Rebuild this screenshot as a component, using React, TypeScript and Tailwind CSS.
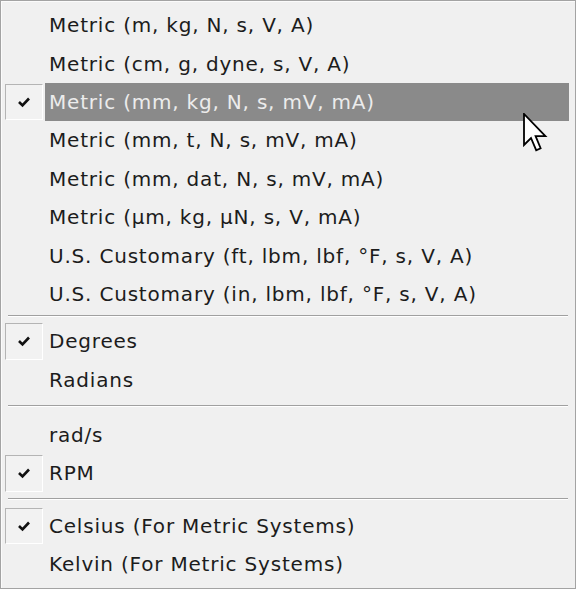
import React from "react";

type Item = { label: string; checked?: boolean; active?: boolean };

const groups: { items: Item[]; sep: string }[] = [
    {
        sep: "",
        items: [
            { label: "Metric (m, kg, N, s, V, A)" },
            { label: "Metric (cm, g, dyne, s, V, A)" },
            { label: "Metric (mm, kg, N, s, mV, mA)", checked: true, active: true },
            { label: "Metric (mm, t, N, s, mV, mA)" },
            { label: "Metric (mm, dat, N, s, mV, mA)" },
            { label: "Metric (μm, kg, μN, s, V, mA)" },
            { label: "U.S. Customary (ft, lbm, lbf, °F, s, V, A)" },
            { label: "U.S. Customary (in, lbm, lbf, °F, s, V, A)" },
        ],
    },
    {
        sep: "h-[9px] pt-[2px]",
        items: [{ label: "Degrees", checked: true }, { label: "Radians" }],
    },
    {
        sep: "h-[17px] pt-[6px]",
        items: [{ label: "rad/s" }, { label: "RPM", checked: true }],
    },
    {
        sep: "h-[14px] pt-[5px]",
        items: [{ label: "Celsius (For Metric Systems)", checked: true }, { label: "Kelvin (For Metric Systems)" }],
    },
];

function Check() {
    return (
        <svg width="14" height="12" viewBox="0 0 14 12">
            <path d="M2 6 L5.5 9.5 L12 2.5" fill="none" stroke="#111" strokeWidth="2.6" />
        </svg>
    );
}

function Row({ item }: { item: Item }) {
    return (
        <div className="flex h-[38.4px] items-stretch">
            <div className="w-[43px] shrink-0 py-[1px] pl-[3px] pr-[2px]">
                {item.checked && (
                    <div className="flex h-full items-center justify-center border border-l-[#b4b4b4] border-t-[#b4b4b4] border-b-white border-r-white bg-[#f2f2f2]">
                        <Check />
                    </div>
                )}
            </div>
            <div
                className={
                    "flex flex-1 items-center pl-[4px] mr-[6px] " +
                    (item.active ? "bg-[#8a8a8a] text-[#ececec]" : "text-[#1c1c1c]")
                }
            >
                {item.label}
            </div>
        </div>
    );
}

export default function App() {
    return (
        <div
            className="relative h-[589px] w-[576px] border border-[#a3a3a3] bg-[#f0f0f0] text-[20px] leading-none tracking-[0.8px]"
            style={{ fontFamily: '"DejaVu Sans", "Noto Sans", sans-serif' }}
        >
            <div className="h-full border-l border-t border-[#fbfbfb] pt-[4px]">
                {groups.map((g, gi) => (
                    <div key={gi}>
                        {g.sep && (
                            <div className={g.sep + " pl-[6px] pr-[7px]"}>
                                <div className="h-[1px] bg-[#a0a0a0]" />
                                <div className="h-[1px] bg-white" />
                            </div>
                        )}
                        {g.items.map((it) => (
                            <Row key={it.label} item={it} />
                        ))}
                    </div>
                ))}
            </div>
            <svg className="absolute left-[522px] top-[112px]" width="26" height="40" viewBox="0 0 13 20">
                <path
                    d="M0.5 0.5 L0.5 16 L4 12.5 L6.6 18.6 L8.8 17.6 L6.3 11.6 L11.2 11.6 Z"
                    fill="#fff"
                    stroke="#000"
                    strokeWidth="0.9"
                    strokeLinejoin="miter"
                />
            </svg>
        </div>
    );
}
